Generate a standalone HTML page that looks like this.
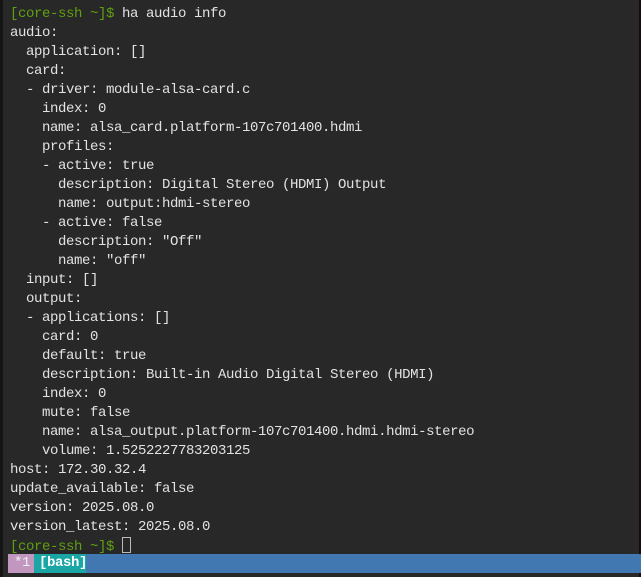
<!DOCTYPE html>
<html><head><style>
html,body{margin:0;padding:0;}
body{width:641px;height:577px;background:#282828;position:relative;overflow:hidden;font-family:"Liberation Mono",monospace;}
.lb{position:absolute;left:0;top:0;width:3px;height:577px;background:#141414;}
.rb{position:absolute;right:0;top:0;width:2px;height:577px;background:#1a0a0a;}
pre{position:absolute;left:10px;top:5px;margin:0;font-family:"Liberation Mono",monospace;font-size:14px;letter-spacing:-0.4px;line-height:19px;color:#e2e2e2;}
.g{color:#5fa010;}
.cur{display:inline-block;width:9px;height:16px;border:1px solid #bbb;box-sizing:border-box;vertical-align:-3px;}
.bar{position:absolute;left:8px;top:554px;width:633px;height:19px;background:#4178b2;font-size:14px;letter-spacing:-0.4px;line-height:19px;font-family:"Liberation Mono",monospace;}
.p{position:absolute;left:0;top:0;width:26px;height:19px;background:#c197bf;color:#eee;padding-left:6px;box-sizing:border-box;}
.t{position:absolute;left:26px;top:0;width:52px;height:19px;background:#1ba6a6;color:#fff;font-weight:bold;padding-left:5px;box-sizing:border-box;}
</style></head><body>
<div class="lb"></div><div class="rb"></div>
<pre><span class="g">[core-ssh ~]$</span> ha audio info
audio:
  application: []
  card:
  - driver: module-alsa-card.c
    index: 0
    name: alsa_card.platform-107c701400.hdmi
    profiles:
    - active: true
      description: Digital Stereo (HDMI) Output
      name: output:hdmi-stereo
    - active: false
      description: "Off"
      name: "off"
  input: []
  output:
  - applications: []
    card: 0
    default: true
    description: Built-in Audio Digital Stereo (HDMI)
    index: 0
    mute: false
    name: alsa_output.platform-107c701400.hdmi.hdmi-stereo
    volume: 1.5252227783203125
host: 172.30.32.4
update_available: false
version: 2025.08.0
version_latest: 2025.08.0
<span class="g">[core-ssh ~]$</span> <span class="cur"></span></pre>
<div class="bar"><div class="p">*1</div><div class="t">[bash]</div></div>
</body></html>
